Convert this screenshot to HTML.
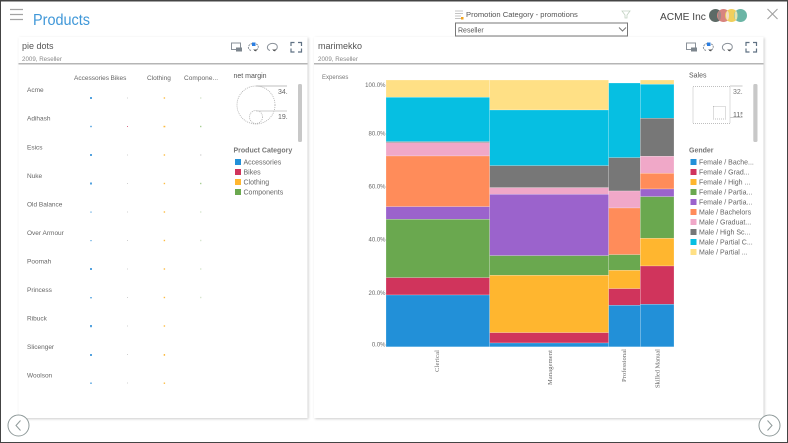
<!DOCTYPE html>
<html><head><meta charset="utf-8">
<style>
html,body{margin:0;padding:0;width:788px;height:443px;overflow:hidden;background:#fff}
svg{display:block;font-family:"Liberation Sans",sans-serif}
text{fill:#666}
#root{filter:blur(.3px)}
</style></head><body>
<svg id="root" width="788" height="443" viewBox="0 0 788 443" xmlns="http://www.w3.org/2000/svg">
<defs>
<filter id="s" x="-3%" y="-3%" width="106%" height="106%"><feDropShadow dx="1" dy="1" stdDeviation="1.2" flood-color="#000" flood-opacity=".2"/></filter>
<g id="ic" fill="none" stroke-width="1">
<rect x="0.5" y="1.5" width="9" height="6.5" stroke="#8a9199"/><rect x="5" y="6" width="6" height="4" fill="#7d868e" stroke="none"/>
<path d="M20 9c-3-1-3.500-4-1-6 3-2 7-1 8 1 1 3-1 5-4 5" stroke="#8a9199" stroke-dasharray="2 .8"/><rect x="21" y="1" width="3.500" height="3.500" fill="#2a7de1"/><path d="M22 8l3 2 1-2z" fill="#555" stroke="none"/>
<path d="M39 9c-3-1-3.500-4-1-6 3-2 7-1 8 1 1 3-1 5-4 5" stroke="#8a9199"/><path d="M41 8l3 2 1-2z" fill="#555" stroke="none"/>
<path d="M60 4.500v-3.500h3.500M67 1h3.500v3.500M70.500 7v3.500h-3.500M63.500 10.500h-3.500v-3.500" stroke="#5f7183" stroke-width="1.200"/>
</g>
</defs>

<!-- window frame -->
<rect x="0.500" y="0.500" width="787" height="442" fill="#fff" stroke="#444"/>
<rect x="0" y="0" width="788" height="1.500" fill="#444"/>

<!-- header -->
<path d="M10 9.500h13M10 14.500h13M10 19.500h13" stroke="#a3a3a3" stroke-width="1.200"/>
<text x="33" y="25" font-size="16" textLength="57" lengthAdjust="spacingAndGlyphs" style="fill:#3f97d8">Products</text>

<g fill="none">
<path d="M455 11h8M455 13.500h8M455 16h6M455 18.500h6" stroke="#c4c4c4"/>
<rect x="461" y="17" width="2.500" height="2.500" fill="#f2a31b"/>
<path d="M622 11h8l-3 4v3l-2 0v-3z" stroke="#c2d2c2" stroke-width=".8"/>
</g>
<text x="466" y="17" font-size="7.600" style="fill:#555">Promotion Category - promotions</text>
<rect x="455.500" y="23" width="172" height="13" fill="#fff" stroke="#777"/>
<text x="458" y="32.500" font-size="7" style="fill:#555">Reseller</text>
<path d="M619 27.500l3.500 3.500 3.500-3.500" fill="none" stroke="#777"/>

<text x="660" y="20" font-size="10.200" style="fill:#444">ACME Inc</text>
<circle cx="715.500" cy="15.500" r="6.500" fill="#5d6a66"/>
<circle cx="723.500" cy="15.500" r="6.500" fill="#d8847f"/>
<circle cx="731.500" cy="15.500" r="6.500" fill="#f0cf5c"/>
<circle cx="740.500" cy="15.500" r="6.500" fill="#6bb5a5"/>
<ellipse cx="719.500" cy="15.500" rx="1.500" ry="4.500" fill="#a08a88"/>
<ellipse cx="727.500" cy="15.500" rx="1.500" ry="4.500" fill="#f3dcc8"/>
<ellipse cx="736" cy="15.500" rx="1.500" ry="4.500" fill="#e6e4b0"/>
<path d="M767.500 9l10 10M777.500 9l-10 10" stroke="#a0a0a0" stroke-width="1.100"/>

<!-- panel 1 -->
<rect x="18.500" y="37" width="289" height="381" fill="#fff" filter="url(#s)"/>
<rect x="18.500" y="63" width="289" height="1.500" fill="#b5b5b5"/>
<text x="22" y="49" font-size="9" style="fill:#555">pie dots</text>
<text x="22" y="61" font-size="6.200" style="fill:#888">2009, Reseller</text>
<use href="#ic" x="231" y="41.500"/>

<g font-size="6.500" style="fill:#777">
<text x="74" y="80">Accessories</text><text x="110.500" y="80">Bikes</text><text x="147" y="80">Clothing</text><text x="184" y="80" textLength="34">Compone...</text>
<text x="27" y="92">Acme</text><text x="27" y="120.500">Adihash</text><text x="27" y="149.500">Esics</text><text x="27" y="178">Nuke</text><text x="27" y="206.500">Old Balance</text><text x="27" y="235">Over Armour</text><text x="27" y="263.500">Poomah</text><text x="27" y="292">Princess</text><text x="27" y="320.500">Ribuck</text><text x="27" y="349">Slicenger</text><text x="27" y="377.500">Woolson</text>
</g>

<!-- dots -->
<g fill="#2a8dd8" opacity=".8">
<rect x="90" y="97" width="2" height="2"/><rect x="90.200" y="125.800" width="1.600" height="1.400"/><rect x="90" y="154" width="2" height="2"/><rect x="90" y="182.500" width="2" height="2"/><rect x="90.400" y="211.500" width="1.200" height="1.200"/><rect x="90.400" y="240" width="1.200" height="1.200"/><rect x="90" y="268" width="2" height="2"/><rect x="90.200" y="297" width="1.600" height="1.400"/><rect x="90" y="325" width="2" height="2.200"/><rect x="90" y="354" width="2" height="2"/><rect x="90.200" y="382.500" width="1.600" height="1.400"/>
</g>
<g fill="#d0d0d0">
<rect x="127" y="97.500" width="1" height="1"/><rect x="127" y="126" width="1" height="1" fill="#d9708a"/><rect x="127" y="154.500" width="1" height="1"/><rect x="127" y="183" width="1" height="1"/><rect x="127" y="211.500" width="1" height="1"/><rect x="127" y="240" width="1" height="1"/><rect x="127" y="268.500" width="1" height="1"/><rect x="127" y="297" width="1" height="1"/><rect x="127" y="325.500" width="1" height="1"/><rect x="127" y="354" width="1" height="1"/><rect x="127" y="382.500" width="1" height="1"/>
</g>
<g fill="#fcb52e" opacity=".9">
<rect x="163.700" y="97.300" width="1.400" height="1.400"/><rect x="163.500" y="125.800" width="1.800" height="1.500"/><rect x="163.700" y="154.300" width="1.400" height="1.400"/><rect x="163.700" y="182.800" width="1.400" height="1.400"/><rect x="163.700" y="211.300" width="1.400" height="1.400"/><rect x="163.700" y="239.800" width="1.400" height="1.400"/><rect x="163.700" y="268.300" width="1.400" height="1.400"/><rect x="163.700" y="296.800" width="1.400" height="1.400"/><rect x="163.700" y="325.300" width="1.400" height="1.400"/><rect x="163.700" y="354" width="1.400" height="1.800"/><rect x="163.700" y="382.500" width="1.400" height="1.400"/>
</g>
<g fill="#a9cf96">
<rect x="200" y="97.300" width="1.400" height="1.400" fill="#d8e6d0"/><rect x="200" y="125.800" width="1.400" height="1.400"/><rect x="200" y="154.300" width="1.400" height="1.400" fill="#d8d8d8"/><rect x="200" y="182.800" width="1.400" height="1.400"/><rect x="200" y="211.300" width="1.400" height="1.400" fill="#d8e6d0"/><rect x="200" y="239.800" width="1.400" height="1.400" fill="#d8e6d0"/><rect x="200" y="268.300" width="1.400" height="1.400" fill="#d8e6d0"/><rect x="200" y="296.800" width="1.400" height="1.400" fill="#d8e6d0"/>
</g>

<text x="233.500" y="78" font-size="7" style="fill:#555">net margin</text>
<circle cx="256" cy="105" r="19" fill="none" stroke="#aaa" stroke-width=".8" stroke-dasharray="1 1"/>
<circle cx="256" cy="117" r="6.500" fill="none" stroke="#aaa" stroke-width=".8" stroke-dasharray="1 1"/>
<path d="M256 86h31" stroke="#aaa" stroke-width=".8"/>
<path d="M256 111h31" stroke="#ccc" stroke-width="1"/>
<text x="278" y="94" font-size="7" style="fill:#666">34.</text>
<text x="278" y="119" font-size="7" style="fill:#666">19.</text>
<rect x="298" y="84" width="4" height="58" rx="1.500" fill="#c8c8c8"/>

<text x="233.500" y="152.500" font-size="7" font-weight="bold" style="fill:#777">Product Category</text>
<g>
<rect x="235" y="159" width="6" height="6" fill="#2290d8"/><rect x="235" y="169" width="6" height="6" fill="#d0345c"/><rect x="235" y="179" width="6" height="6" fill="#ffb62f"/><rect x="235" y="189" width="6" height="6" fill="#6aa84f"/>
</g>
<g font-size="7" style="fill:#666">
<text x="243.500" y="164.500">Accessories</text><text x="243.500" y="174.500">Bikes</text><text x="243.500" y="184.500">Clothing</text><text x="243.500" y="194.500">Components</text>
</g>

<!-- panel 2 -->
<rect x="314" y="37" width="449.500" height="381" fill="#fff" filter="url(#s)"/>
<rect x="314" y="63" width="449.500" height="1.500" fill="#b5b5b5"/>
<text x="318" y="49" font-size="9" style="fill:#555">marimekko</text>
<text x="318" y="61" font-size="6.200" style="fill:#888">2009, Reseller</text>
<use href="#ic" x="686" y="41.500"/>

<text x="322" y="79" font-size="6" style="fill:#777">Expenses</text>
<g font-size="6" text-anchor="end" style="fill:#777">
<text x="385.500" y="87">100.0%</text><text x="385.500" y="135.500">80.0%</text><text x="385.500" y="188.500">60.0%</text><text x="385.500" y="241.500">40.0%</text><text x="385.500" y="295">20.0%</text><text x="385.500" y="346.500">0.0%</text>
</g>

<!-- mekko -->
<g stroke="#fff" stroke-opacity=".35" stroke-width=".6">
<!-- col1 -->
<rect x="386" y="80" width="103.700" height="17.300" fill="#ffe085"/>
<rect x="386" y="97.300" width="103.700" height="44.400" fill="#06bfe2"/>
<rect x="386" y="141.700" width="103.700" height="1" fill="#777"/>
<rect x="386" y="142.700" width="103.700" height="13.300" fill="#f0a8c8"/>
<rect x="386" y="156" width="103.700" height="50.700" fill="#ff8c5a"/>
<rect x="386" y="206.700" width="103.700" height="12.600" fill="#9b63cc"/>
<rect x="386" y="219.300" width="103.700" height="58.400" fill="#6aa84f"/>
<rect x="386" y="277.700" width="103.700" height="17.300" fill="#d0345c"/>
<rect x="386" y="295" width="103.700" height="51.800" fill="#2290d8"/>
<!-- col2 -->
<rect x="489.700" y="80" width="119" height="30" fill="#ffe085"/>
<rect x="489.700" y="110" width="119" height="55.700" fill="#06bfe2"/>
<rect x="489.700" y="165.700" width="119" height="22" fill="#777"/>
<rect x="489.700" y="187.700" width="119" height="6.600" fill="#f0a8c8"/>
<rect x="489.700" y="194.300" width="119" height="61.400" fill="#9b63cc"/>
<rect x="489.700" y="255.700" width="119" height="19.600" fill="#6aa84f"/>
<rect x="489.700" y="275.300" width="119" height="57.400" fill="#ffb62f"/>
<rect x="489.700" y="332.700" width="119" height="10.300" fill="#d0345c"/>
<rect x="489.700" y="343" width="119" height="3.800" fill="#2290d8"/>
<!-- col3 -->
<rect x="608.700" y="80" width="31.600" height="3" fill="#fff" stroke="none"/>
<rect x="608.700" y="83" width="31.600" height="74.700" fill="#06bfe2"/>
<rect x="608.700" y="157.700" width="31.600" height="33.300" fill="#777"/>
<rect x="608.700" y="191" width="31.600" height="17" fill="#f0a8c8"/>
<rect x="608.700" y="208" width="31.600" height="46.700" fill="#ff8c5a"/>
<rect x="608.700" y="254.700" width="31.600" height="15.600" fill="#6aa84f"/>
<rect x="608.700" y="270.300" width="31.600" height="18.400" fill="#ffb62f"/>
<rect x="608.700" y="288.700" width="31.600" height="16.600" fill="#d0345c"/>
<rect x="608.700" y="305.300" width="31.600" height="41.500" fill="#2290d8"/>
<!-- col4 -->
<rect x="640.300" y="80" width="33.700" height="4.300" fill="#ffe085"/>
<rect x="640.300" y="84.300" width="33.700" height="34" fill="#06bfe2"/>
<rect x="640.300" y="118.300" width="33.700" height="38" fill="#777"/>
<rect x="640.300" y="156.300" width="33.700" height="17" fill="#f0a8c8"/>
<rect x="640.300" y="173.300" width="33.700" height="15.700" fill="#ff8c5a"/>
<rect x="640.300" y="189" width="33.700" height="7.700" fill="#9b63cc"/>
<rect x="640.300" y="196.700" width="33.700" height="41.600" fill="#6aa84f"/>
<rect x="640.300" y="238.300" width="33.700" height="27.700" fill="#ffb62f"/>
<rect x="640.300" y="266" width="33.700" height="38.300" fill="#d0345c"/>
<rect x="640.300" y="304.300" width="33.700" height="42.500" fill="#2290d8"/>
</g>

<g font-size="6.500" font-family="Liberation Serif" style="fill:#666">
<text transform="translate(439,372) rotate(-90)" textLength="22">Clerical</text>
<text transform="translate(552,385) rotate(-90)" textLength="35">Management</text>
<text transform="translate(626,382) rotate(-90)" textLength="33">Professional</text>
<text transform="translate(659.500,388) rotate(-90)" textLength="39">Skilled Manual</text>
</g>

<text x="689" y="77.500" font-size="7" style="fill:#555">Sales</text>
<rect x="693" y="86.500" width="37" height="37" fill="none" stroke="#aaa" stroke-width=".8" stroke-dasharray="1 1"/>
<rect x="713.500" y="106.500" width="12" height="12.500" fill="none" stroke="#aaa" stroke-width=".8" stroke-dasharray="1 1"/>
<path d="M730 86h12.500" stroke="#bbb" stroke-width=".8"/><path d="M730 117.500h12.500" stroke="#ccc"/>
<svg x="732" y="86" width="10.500" height="34"><text x="1" y="8" font-size="7" style="fill:#777">32.</text><text x="1" y="31" font-size="7" style="fill:#666">115</text></svg>
<rect x="753.300" y="84" width="4.200" height="58" rx="1.500" fill="#c8c8c8"/>

<text x="689" y="152.500" font-size="7" font-weight="bold" style="fill:#777">Gender</text>
<g>
<rect x="690.500" y="159" width="6" height="6" fill="#2290d8"/><rect x="690.500" y="169" width="6" height="6" fill="#d0345c"/><rect x="690.500" y="179" width="6" height="6" fill="#ffb62f"/><rect x="690.500" y="189" width="6" height="6" fill="#6aa84f"/><rect x="690.500" y="199" width="6" height="6" fill="#9b63cc"/><rect x="690.500" y="209" width="6" height="6" fill="#ff8c5a"/><rect x="690.500" y="219" width="6" height="6" fill="#f0a8c8"/><rect x="690.500" y="229" width="6" height="6" fill="#777"/><rect x="690.500" y="239" width="6" height="6" fill="#06bfe2"/><rect x="690.500" y="249" width="6" height="6" fill="#ffe085"/>
</g>
<g font-size="7" style="fill:#666">
<text x="699" y="164.500">Female / Bache...</text><text x="699" y="174.500">Female / Grad...</text><text x="699" y="184.500">Female / High ...</text><text x="699" y="194.500">Female / Partia...</text><text x="699" y="204.500">Female / Partia...</text><text x="699" y="214.500">Male / Bachelors</text><text x="699" y="224.500">Male / Graduat...</text><text x="699" y="234.500">Male / High Sc...</text><text x="699" y="244.500">Male / Partial C...</text><text x="699" y="254.500">Male / Partial ...</text>
</g>

<!-- nav -->
<circle cx="18.500" cy="425.500" r="10.500" fill="#fff" stroke="#8f9a9a" stroke-width="1"/>
<path d="M20.500 420.500l-4.500 5 4.500 5" fill="none" stroke="#8f9a9a" stroke-width="1"/>
<circle cx="769.500" cy="425.500" r="10.500" fill="#fff" stroke="#8f9a9a" stroke-width="1"/>
<path d="M767.500 420.500l4.500 5-4.500 5" fill="none" stroke="#8f9a9a" stroke-width="1"/>
</svg>
</body></html>
